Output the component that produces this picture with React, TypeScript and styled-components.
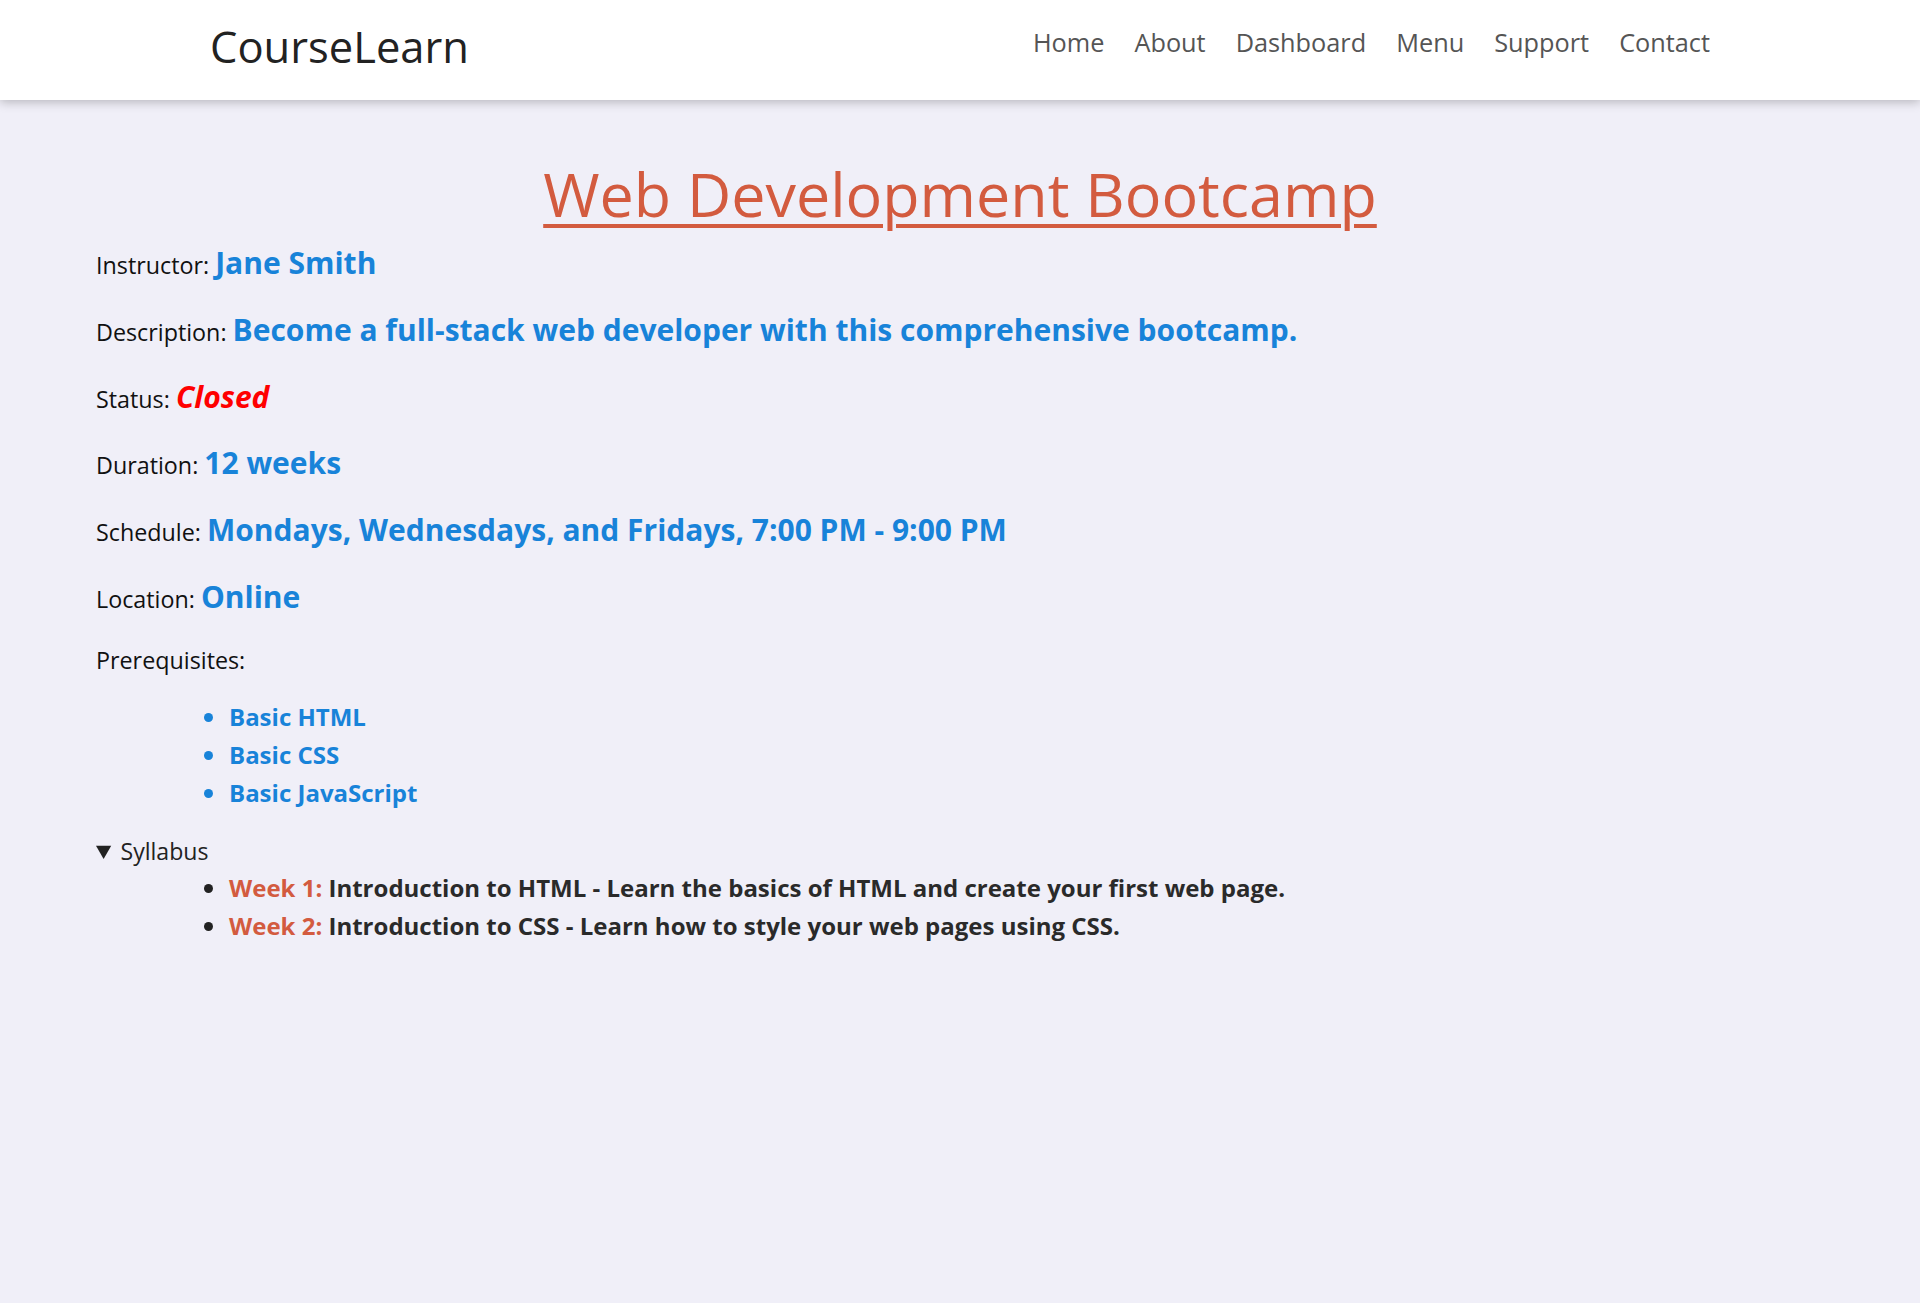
import React from "react";
import styled, { createGlobalStyle } from "styled-components";

const Global = createGlobalStyle`
  html, body { margin: 0; padding: 0; }
  body {
    background: #f0eff8;
    font-family: "Open Sans", "Noto Sans", sans-serif;
    color: #111;
  }
`;

const Header = styled.header`
  background: #ffffff;
  height: 100px;
  box-shadow: 0 2px 10px rgba(0, 0, 0, 0.25);
  position: relative;
  z-index: 1;
`;

const HeaderInner = styled.div`
  max-width: 1500px;
  margin: 0 auto;
  height: 100%;
  display: flex;
  align-items: center;
  justify-content: space-between;
`;

const Logo = styled.div`
  font-size: 43.5px;
  color: #222;
  margin-top: -8px;
`;

const Nav = styled.nav`
  display: flex;
  gap: 30px;
  margin-top: -16px;
`;

const NavLink = styled.a`
  font-size: 25.3px;
  color: #555;
  text-decoration: none;
`;

const Main = styled.main`
  padding: 57px 5% 40px;
`;

const Title = styled.h1`
  text-align: center;
  font-size: 61px;
  font-weight: 400;
  color: #d35b3f;
  text-decoration: underline;
  text-decoration-thickness: 4px;
  text-underline-offset: 7px;
  margin: 0 0 2px;
  line-height: 1.2;
`;

const Row = styled.p`
  margin: 0;
  font-size: 23.3px;
  line-height: 66.7px;
`;

const Value = styled.span<{ $tone?: "blue" | "red" }>`
  font-weight: 700;
  font-size: 30px;
  line-height: 1;
  color: ${(p) => (p.$tone === "red" ? "#ff0000" : "#1883d9")};
  font-style: ${(p) => (p.$tone === "red" ? "italic" : "normal")};
`;

const PrereqLabel = styled.p`
  margin: 0 0 10px;
  font-size: 23.3px;
  line-height: 56px;
`;

const List = styled.ul<{ $tone: "blue" | "dark" }>`
  margin: 0 0 21px;
  padding-left: 132px;
  list-style: disc;
  li {
    font-size: 24px;
    font-weight: 700;
    line-height: 38px;
    padding-left: 1px;
    color: ${(p) => (p.$tone === "blue" ? "#1883d9" : "#2a2a2a")};
  }
  li::marker {
    color: ${(p) => (p.$tone === "blue" ? "#1883d9" : "#222")};
  }
`;

const Details = styled.details`
  font-size: 23.1px;
`;

const Summary = styled.summary`
  color: #222;
  line-height: 36px;
  cursor: pointer;
`;

const Week = styled.span`
  color: #d35b3f;
`;

const prereqs = ["Basic HTML", "Basic CSS", "Basic JavaScript"];

const syllabus = [
  {
    week: "Week 1:",
    text: "Introduction to HTML - Learn the basics of HTML and create your first web page.",
  },
  {
    week: "Week 2:",
    text: "Introduction to CSS - Learn how to style your web pages using CSS.",
  },
];

export default function App() {
  return (
    <>
      <Global />
      <Header>
        <HeaderInner>
          <Logo>CourseLearn</Logo>
          <Nav>
            {["Home", "About", "Dashboard", "Menu", "Support", "Contact"].map((n) => (
              <NavLink key={n} href="#">
                {n}
              </NavLink>
            ))}
          </Nav>
        </HeaderInner>
      </Header>
      <Main>
        <Title>Web Development Bootcamp</Title>
        <Row>
          Instructor: <Value>Jane Smith</Value>
        </Row>
        <Row>
          Description: <Value>Become a full-stack web developer with this comprehensive bootcamp.</Value>
        </Row>
        <Row>
          Status: <Value $tone="red">Closed</Value>
        </Row>
        <Row>
          Duration: <Value>12 weeks</Value>
        </Row>
        <Row>
          Schedule: <Value>Mondays, Wednesdays, and Fridays, 7:00 PM - 9:00 PM</Value>
        </Row>
        <Row>
          Location: <Value>Online</Value>
        </Row>
        <PrereqLabel>Prerequisites:</PrereqLabel>
        <List $tone="blue">
          {prereqs.map((p) => (
            <li key={p}>{p}</li>
          ))}
        </List>
        <Details open>
          <Summary>Syllabus</Summary>
          <List $tone="dark">
            {syllabus.map((s) => (
              <li key={s.week}>
                <Week>{s.week}</Week> {s.text}
              </li>
            ))}
          </List>
        </Details>
      </Main>
    </>
  );
}
